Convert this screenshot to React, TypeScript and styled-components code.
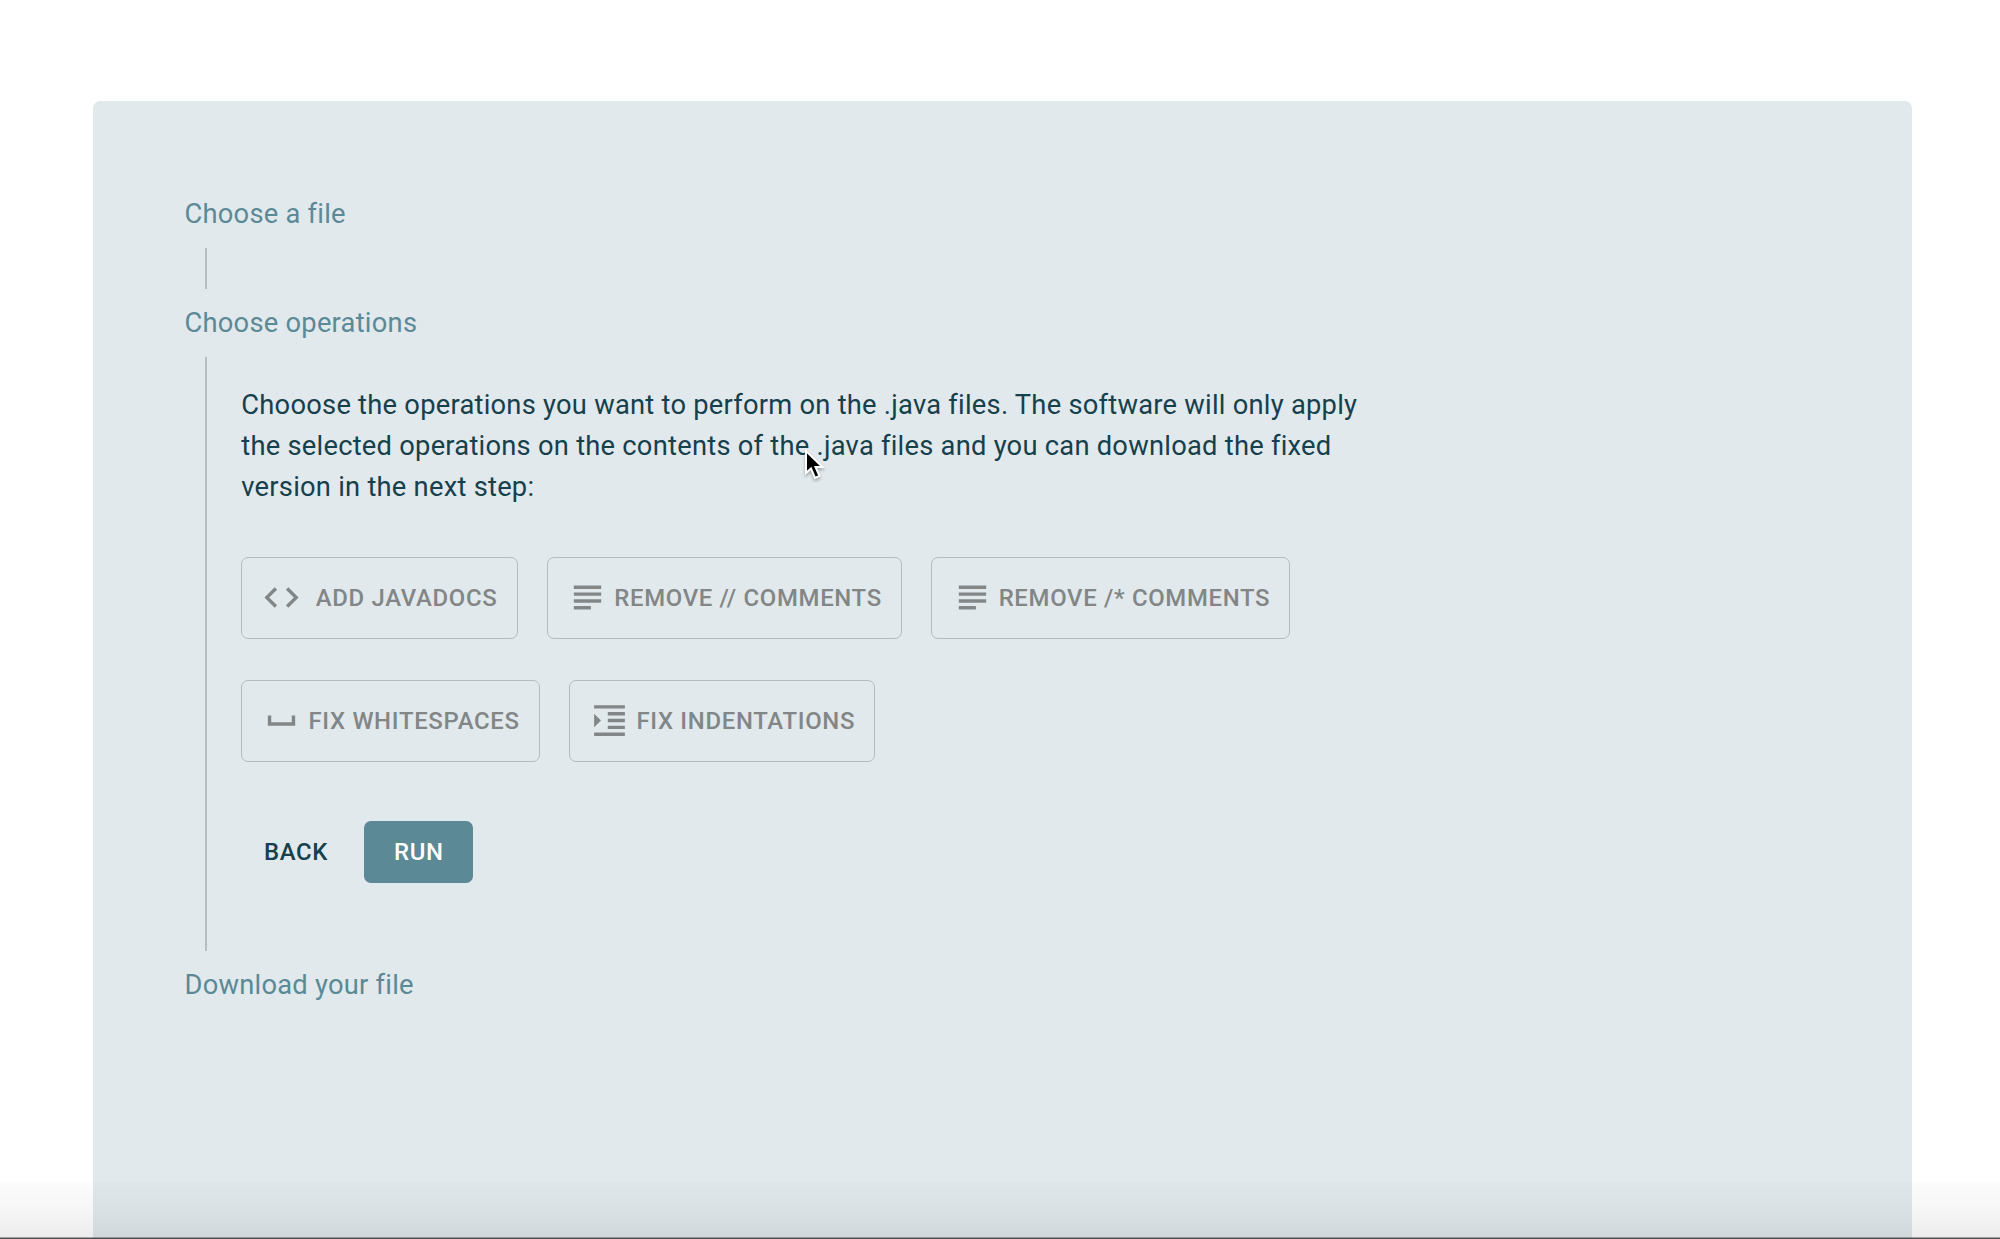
import React from "react";
import styled, { createGlobalStyle } from "styled-components";
import { MdCode, MdSubject, MdSpaceBar, MdFormatIndentIncrease } from "react-icons/md";

const GlobalStyle = createGlobalStyle`
  * { box-sizing: border-box; }
  body { margin: 0; background: #fff; overflow: hidden; font-family: Roboto, "Liberation Sans", sans-serif; }
`;

const Page = styled.div`
  position: relative;
  height: 1239px;
  padding: 101px 88.5px 0 92.5px;
  overflow: hidden;
`;

const Panel = styled.main`
  height: 1160px;
  padding: 92.6px 92px;
  border-radius: 7px;
  background: #e1e9ec;
`;

const StepLabel = styled.h2`
  margin: 0;
  font-size: 27.32px;
  line-height: 41px;
  font-weight: 400;
  letter-spacing: 0.24px;
  color: #5b8996;
`;

const StepBody = styled.section<{ $height: number }>`
  height: ${(p) => p.$height}px;
  margin: 13.6px 0 13.6px 20.5px;
  padding: 27.2px 0 0 34.3px;
  border-left: 2px solid #b9bcbf;
`;

const Intro = styled.p`
  width: 1130px;
  margin: 0;
  font-size: 27.32px;
  line-height: 41px;
  letter-spacing: 0.24px;
  color: #16404c;
`;

const Operations = styled.div`
  display: flex;
  flex-wrap: wrap;
  gap: 41.4px 29.4px;
  width: 1130px;
  margin-top: 49.4px;
`;

const OperationButton = styled.button<{ $gap?: number }>`
  display: flex;
  align-items: center;
  gap: ${(p) => p.$gap ?? 6}px;
  height: 81.6px;
  padding: 0 19.2px;
  border: 1px solid #b4bcbf;
  border-radius: 7px;
  background: transparent;
  color: #828687;
  font: 500 23.92px/42px Roboto, sans-serif;
  letter-spacing: 0.684px;
  white-space: nowrap;

  svg { width: 41px; height: 41px; flex: none; }
`;

const Actions = styled.div`
  display: flex;
  margin-top: 59.6px;
`;

const ActionButton = styled.button<{ $primary?: boolean }>`
  height: 61.5px;
  width: ${(p) => (p.$primary ? 109 : 109.4)}px;
  margin-right: 13.7px;
  padding: 0;
  border: 0;
  border-radius: 7px;
  background: ${(p) => (p.$primary ? "#5b8996" : "transparent")};
  color: ${(p) => (p.$primary ? "#fff" : "#16404c")};
  font: 500 23.92px/42px Roboto, sans-serif;
  letter-spacing: 0.66px;
`;

const Cursor = styled.svg`
  position: absolute;
  left: 801px;
  top: 447px;
  filter: drop-shadow(0 2px 1.5px rgba(0, 0, 0, 0.3));
`;

const BottomShade = styled.div`
  position: absolute;
  inset: auto 0 0 0;
  height: 57px;
  background: linear-gradient(rgba(0, 0, 0, 0.01), rgba(0, 0, 0, 0.035) 50%, rgba(0, 0, 0, 0.075));
  border-bottom: 1px solid #4c4e4f;
  box-shadow: inset 0 -1px 0 rgba(0, 0, 0, 0.3);
`;

export default function App() {
  return (
    <Page>
      <GlobalStyle />
      <Panel>
        <StepLabel>Choose a file</StepLabel>
        <StepBody $height={41} />
        <StepLabel>Choose operations</StepLabel>
        <StepBody $height={594}>
          <Intro>
            Chooose the operations you want to perform on the .java files. The software will only apply
            the selected operations on the contents of the .java files and you can download the fixed
            version in the next step:
          </Intro>
          <Operations>
            <OperationButton $gap={13.3}><MdCode />ADD JAVADOCS</OperationButton>
            <OperationButton><MdSubject />REMOVE // COMMENTS</OperationButton>
            <OperationButton><MdSubject />REMOVE /* COMMENTS</OperationButton>
            <OperationButton><MdSpaceBar />FIX WHITESPACES</OperationButton>
            <OperationButton><MdFormatIndentIncrease />FIX INDENTATIONS</OperationButton>
          </Operations>
          <Actions>
            <ActionButton>BACK</ActionButton>
            <ActionButton $primary>RUN</ActionButton>
          </Actions>
        </StepBody>
        <StepLabel>Download your file</StepLabel>
      </Panel>
      <Cursor width="30" height="36" viewBox="0 0 30 36">
        <path d="M5 4V26L10 21.5L14 31L18.5 29L14.5 20H21.5Z" fill="#000" stroke="#fff" strokeWidth="2" />
      </Cursor>
      <BottomShade />
    </Page>
  );
}
